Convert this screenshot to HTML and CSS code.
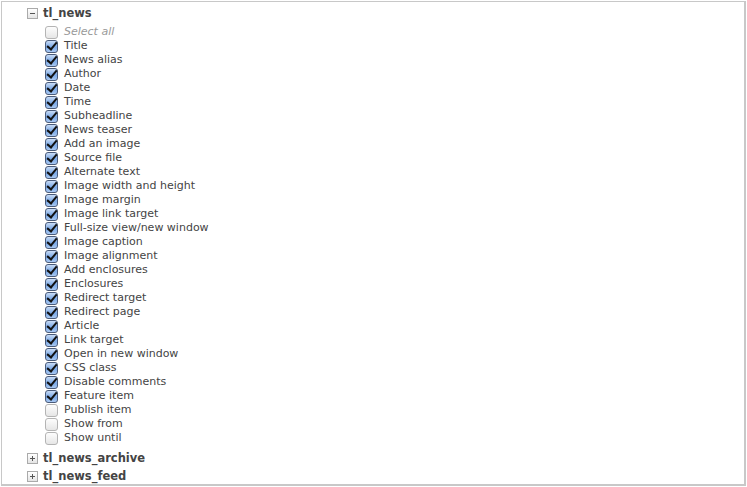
FILE: index.html
```html
<!DOCTYPE html>
<html>
<head>
<meta charset="utf-8">
<link rel="stylesheet" href="styles.css">
</head>
<body>
<div class="frame">
  <div class="group">
    <div class="ghead"><span class="tog minus"></span><span class="gname">tl_news</span></div>
    <ul class="list">
      <li class="sel"><span class="cb"></span>Select all</li>
      <li><span class="cb on"></span>Title</li>
      <li><span class="cb on"></span>News alias</li>
      <li><span class="cb on"></span>Author</li>
      <li><span class="cb on"></span>Date</li>
      <li><span class="cb on"></span>Time</li>
      <li><span class="cb on"></span>Subheadline</li>
      <li><span class="cb on"></span>News teaser</li>
      <li><span class="cb on"></span>Add an image</li>
      <li><span class="cb on"></span>Source file</li>
      <li><span class="cb on"></span>Alternate text</li>
      <li><span class="cb on"></span>Image width and height</li>
      <li><span class="cb on"></span>Image margin</li>
      <li><span class="cb on"></span>Image link target</li>
      <li><span class="cb on"></span>Full-size view/new window</li>
      <li><span class="cb on"></span>Image caption</li>
      <li><span class="cb on"></span>Image alignment</li>
      <li><span class="cb on"></span>Add enclosures</li>
      <li><span class="cb on"></span>Enclosures</li>
      <li><span class="cb on"></span>Redirect target</li>
      <li><span class="cb on"></span>Redirect page</li>
      <li><span class="cb on"></span>Article</li>
      <li><span class="cb on"></span>Link target</li>
      <li><span class="cb on"></span>Open in new window</li>
      <li><span class="cb on"></span>CSS class</li>
      <li><span class="cb on"></span>Disable comments</li>
      <li><span class="cb on"></span>Feature item</li>
      <li><span class="cb"></span>Publish item</li>
      <li><span class="cb"></span>Show from</li>
      <li><span class="cb"></span>Show until</li>
    </ul>
  </div>
  <div class="group">
    <div class="ghead"><span class="tog plus"></span><span class="gname">tl_news_archive</span></div>
  </div>
  <div class="group">
    <div class="ghead"><span class="tog plus"></span><span class="gname">tl_news_feed</span></div>
  </div>
</div>
</body>
</html>
```
FILE: styles.css
```css
html, body {
  margin: 0;
  padding: 0;
  background: #fff;
}
body {
  padding: 1px 0 0 1px;
  font-family: "DejaVu Sans", Verdana, sans-serif;
  font-size: 11px;
  color: #444;
}
.frame {
  box-sizing: border-box;
  width: 745px;
  height: 485px;
  border: 1px solid #c8c8c8;
  border-right: 2px solid #c8c8c8;
  border-bottom: 2px solid #c8c8c8;
  padding: 2px 0 0 25px;
}
.ghead {
  display: flex;
  align-items: center;
  height: 18px;
}
.gname {
  font-weight: bold;
  font-size: 11.5px;
  color: #444;
  margin-left: 5px;
}
.tog {
  position: relative;
  box-sizing: border-box;
  width: 11px;
  height: 11px;
  border: 1px solid #aaa;
  background: linear-gradient(#fff, #e4e4e4);
}
.tog::before {
  content: "";
  position: absolute;
  left: 2px;
  top: 4px;
  width: 5px;
  height: 1px;
  background: #555;
}
.tog.plus::after {
  content: "";
  position: absolute;
  left: 4px;
  top: 2px;
  width: 1px;
  height: 5px;
  background: #555;
}
.list {
  list-style: none;
  margin: 3px 0 4px 0;
  padding: 0 0 0 18px;
}
.list li {
  display: flex;
  align-items: center;
  height: 14px;
  line-height: 14px;
}
.list li.sel {
  font-style: italic;
  color: #999;
}
.cb {
  position: relative;
  box-sizing: border-box;
  width: 13px;
  height: 13px;
  margin-right: 6px;
  border: 1px solid #b4b4b4;
  border-radius: 3px;
  background: linear-gradient(#fdfdfd, #e6e6e6);
}
.cb.on {
  border-color: #4a5b7a;
  background: linear-gradient(#c9dcf6, #7aa8e6 55%, #a9c8f2);
}
.cb.on::after {
  content: "";
  position: absolute;
  left: 3px;
  top: -1px;
  width: 4px;
  height: 8px;
  border-right: 2px solid #111;
  border-bottom: 2px solid #111;
  transform: rotate(40deg);
}
```
